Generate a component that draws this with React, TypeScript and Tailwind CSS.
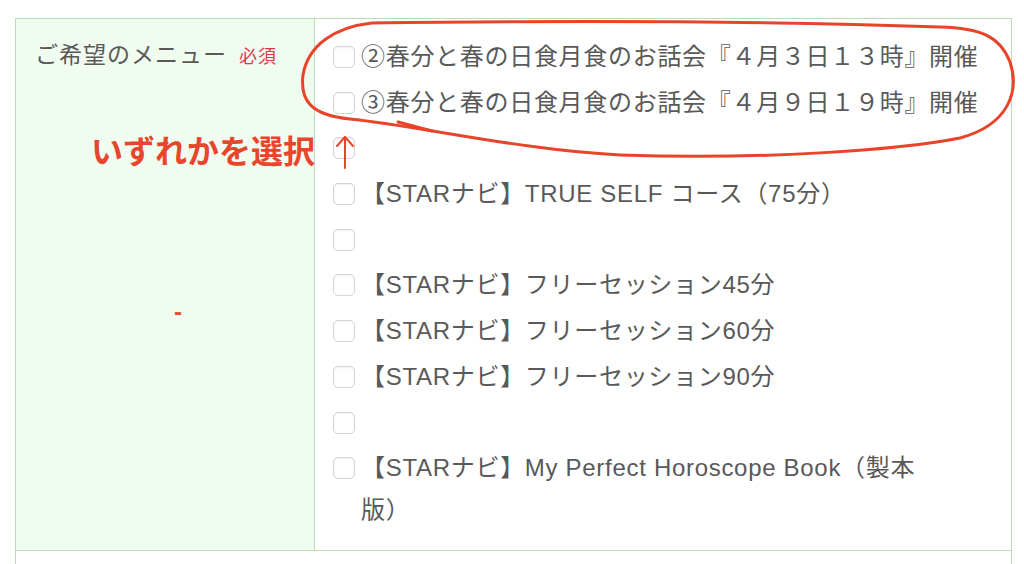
import React from 'react'

const menus = [
  '②春分と春の日食月食のお話会『４月３日１３時』開催',
  '③春分と春の日食月食のお話会『４月９日１９時』開催',
  '',
  '【STARナビ】TRUE SELF コース（75分）',
  '',
  '【STARナビ】フリーセッション45分',
  '【STARナビ】フリーセッション60分',
  '【STARナビ】フリーセッション90分',
  '',
  '【STARナビ】My Perfect Horoscope Book（製本\n版）',
]

function MenuOption({ label }: { label: string }) {
  return (
    <label className="flex min-h-[42px] items-start gap-[6px] leading-[42px]">
      <input
        type="checkbox"
        className="mt-[10px] h-[22px] w-[22px] shrink-0 appearance-none rounded-[5px] border border-[#d3d3d3] bg-white shadow-[inset_0_1px_2px_rgba(0,0,0,0.06)]"
      />
      <span className="whitespace-pre-line">{label}</span>
    </label>
  )
}

export default function App() {
  return (
    <div className="relative h-[564px] w-[1024px] overflow-hidden bg-white pl-[15px] pr-[12px] pt-[18px] font-[family-name:'Liberation_Sans','Noto_Sans_CJK_JP',sans-serif] text-[#595959]">
      <div className="border border-[#bcdcb8]">
        <div className="flex">
          {/* 見出しセル */}
          <div className="w-[299px] shrink-0 border-r border-[#bcdcb8] bg-[#f1fcf0] pl-[19px] pt-[15px]">
            <div className="flex items-baseline gap-[12px] text-[23px] leading-[42px] tracking-[1px]">
              <span>ご希望のメニュー</span>
              <span className="text-[18px] tracking-[1px] text-[#dc3a4c]">必須</span>
            </div>
            <div className="mt-[224px] pl-[139px] text-[24px] font-bold leading-[20px] text-[#ee4a2c]">-</div>
          </div>

          <div className="flex flex-1 flex-col gap-[3.7px] pb-[19px] pl-[18px] pr-[14px] pt-[17px] text-[24px] tracking-[0.7px]">
            {menus.map((m, i) => (
              <MenuOption key={i} label={m} />
            ))}
          </div>
        </div>
        <div className="h-[40px] border-t border-[#bcdcb8]" />
      </div>

      {/* 手書きの注釈 */}
      <div className="absolute left-[91px] top-[133px] text-[32px] font-bold leading-[38px] text-[#e9452c]">いずれかを選択</div>
      <svg className="pointer-events-none absolute left-0 top-0" width="1024" height="564" viewBox="0 0 1024 564" fill="none">
        <g stroke="#e8442a" strokeWidth="3" strokeLinecap="round" strokeLinejoin="round">
          <path d="M372 23 C335 27 308 45 303 75 C300 100 310 115 350 119 C420 126 520 150 620 155 C760 160 900 150 960 138 C1008 125 1020 92 1010 62 C1000 36 980 28 940 27 C800 22 600 20 372 23" />
          <path d="M398 122 L432 131" />
        </g>
        <g stroke="#e9452c" strokeWidth="2" strokeLinecap="round" strokeLinejoin="round">
          <path d="M345 137 L345 168" />
          <path d="M337 146 L345 137 L353 146" />
        </g>
      </svg>
    </div>
  )
}
